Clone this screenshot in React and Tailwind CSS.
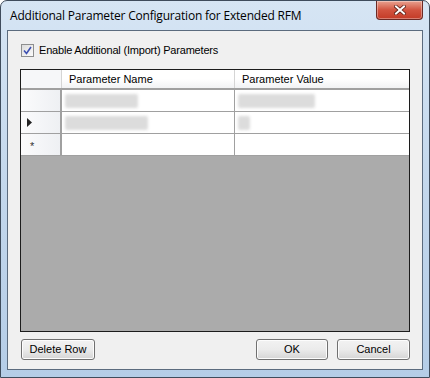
import React from 'react'

const ui = { fontFamily: '"Liberation Sans", Arial, sans-serif' }
const seg = { fontFamily: '"Open Sans", "Noto Sans", sans-serif' }

function Btn({ children, className = '' }) {
  return (
    <button
      className={`h-[21px] rounded-[3px] border border-[#707070] bg-gradient-to-b from-[#f2f2f2] via-[#ebebeb] to-[#d5d5d5] text-[11px] text-black shadow-[inset_0_0_0_1px_#fcfcfc] ${className}`}
      style={ui}
    >
      {children}
    </button>
  )
}

function RowHead({ mark }) {
  return (
    <div className="w-[41px] shrink-0 flex items-center pl-[6px] border-r-2 border-b border-[#a0a0a0] bg-gradient-to-r from-[#fbfbfc] to-[#eef0f3]">
      {mark === 'cur' && (
        <svg width="5" height="9" viewBox="0 0 5 9"><path d="M0 0 L5 4.5 L0 9 Z" fill="#222" /></svg>
      )}
      {mark === 'new' && <span className="text-[11px] leading-none text-[#333] ml-[3px] mt-[3px]" style={ui}>*</span>}
    </div>
  )
}

function Cell({ blur, w, className = '' }) {
  return (
    <div className={`flex items-center bg-white border-b border-[#a0a0a0] ${className}`}>
      {blur && <div className="h-[14px] ml-[3px] bg-[#dcdcdc] blur-[1.5px] rounded-[2px]" style={{ width: w }} />}
    </div>
  )
}

export default function App() {
  return (
    <div className="w-[430px] h-[378px] bg-white">
      <div className="w-full h-full rounded-t-[7px] border border-[#3f4c5c] bg-gradient-to-b from-[#d6e5f4] via-[#c3d7ec] to-[#b5cde7] flex flex-col">
        <div className="h-[29px] flex items-start justify-between pl-[9px] shrink-0">
          <div className="pt-[6px] text-[12px] tracking-[-0.2px] text-black" style={seg}>Additional Parameter Configuration for Extended RFM</div>
          <div className="mr-[6px] w-[47px] h-[19px] rounded-b-[4px] border border-t-0 border-[#6b2a25] bg-gradient-to-b from-[#e8a190] via-[#d2533f] to-[#c33a26] flex items-center justify-center shadow-[inset_0_0_0_1px_rgba(255,255,255,0.35)]">
            <svg width="12" height="10" viewBox="0 0 12 10">
              <path d="M2 1.5 L10 8.5 M10 1.5 L2 8.5" stroke="#5a1e16" strokeWidth="3.6" strokeLinecap="square" />
              <path d="M2 1.5 L10 8.5 M10 1.5 L2 8.5" stroke="#fff" strokeWidth="2" strokeLinecap="square" />
            </svg>
          </div>
        </div>
        <div className="mx-[6px] mb-[7px] flex-1 border border-[#5b6b7e] bg-[#f0f0f0] flex flex-col px-[12px]" style={ui}>
          <label className="mt-[12px] h-[14px] flex items-center gap-[5px] text-[11px] tracking-[-0.2px] text-black">
            <span className="w-[13px] h-[13px] ml-px border border-[#8e8f8f] bg-gradient-to-br from-[#dcdcdc] to-[#fbfbfb] flex items-center justify-center">
              <svg width="9" height="9" viewBox="0 0 9 9"><path d="M1 4.5 L3.5 7.5 L8 1" fill="none" stroke="#3c4fb1" strokeWidth="1.6" /></svg>
            </span>
            Enable Additional (Import) Parameters
          </label>
          <div className="mt-[12px] h-[263px] border border-[#1c1c1c] bg-[#ababab] flex flex-col text-[11px]">
            <div className="h-[20px] flex shrink-0 border-b-2 border-[#a0a0a0]">
              <div className="w-[41px] border-r border-[#d5d5d5] bg-[#f6f7f9]" />
              <div className="w-[173px] border-r border-[#d5d5d5] bg-gradient-to-b from-white via-white to-[#f1f2f4] pl-[7px] flex items-center">Parameter Name</div>
              <div className="flex-1 bg-gradient-to-b from-white via-white to-[#f1f2f4] pl-[7px] flex items-center">Parameter Value</div>
            </div>
            {[
              { mark: '', a: 73, b: 77 },
              { mark: 'cur', a: 83, b: 12 },
              { mark: 'new', a: 0, b: 0 },
            ].map((r, i) => (
              <div key={i} className="h-[22px] flex shrink-0">
                <RowHead mark={r.mark} />
                <Cell blur={r.a > 0} w={r.a} className="w-[173px] border-r border-[#a0a0a0]" />
                <Cell blur={r.b > 0} w={r.b} className="flex-1" />
              </div>
            ))}
          </div>
          <div className="mt-[7px] flex items-center">
            <Btn className="w-[74px] ml-px">Delete Row</Btn>
            <Btn className="w-[72px] ml-auto">OK</Btn>
            <Btn className="w-[73px] ml-[9px]">Cancel</Btn>
          </div>
        </div>
      </div>
    </div>
  )
}
